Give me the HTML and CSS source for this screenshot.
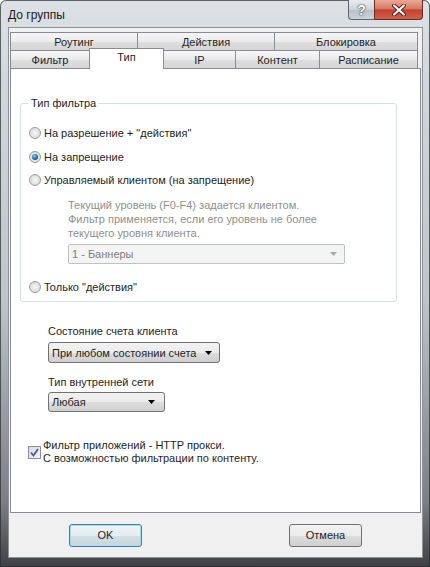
FILE: index.html
```html
<!DOCTYPE html>
<html lang="ru">
<head>
    <meta charset="UTF-8">
    <title>До группы</title>
    <link rel="stylesheet" href="styles.css">
</head>
<body>
<div class="window">
    <div class="titlebar">
        <span class="title">До группы</span>
        <div class="caption-buttons">
            <span class="cap-btn help">?</span>
            <span class="cap-btn close">
                <svg width="14" height="12" viewBox="0 0 14 12">
                    <path d="M2 1.5 L12 10.5 M12 1.5 L2 10.5" stroke="#5a1a12" stroke-width="4" stroke-linecap="round"/>
                    <path d="M2 1.5 L12 10.5 M12 1.5 L2 10.5" stroke="#ffffff" stroke-width="2.2" stroke-linecap="round"/>
                </svg>
            </span>
        </div>
    </div>

    <div class="client">
        <div class="tabs">
            <div class="tab-row">
                <div class="tab first tab-routing">Роутинг</div>
                <div class="tab tab-actions">Действия</div>
                <div class="tab tab-block">Блокировка</div>
            </div>
            <div class="tab-row">
                <div class="tab first tab-filter">Фильтр</div>
                <div class="tab selected tab-type">Тип</div>
                <div class="tab tab-ip">IP</div>
                <div class="tab tab-content">Контент</div>
                <div class="tab tab-sched">Расписание</div>
            </div>
        </div>

        <div class="panel">
            <fieldset class="groupbox">
                <legend>Тип фильтра</legend>
                <div class="radio-row r1"><span class="radio"></span>На разрешение + "действия"</div>
                <div class="radio-row r2"><span class="radio checked"></span>На запрещение</div>
                <div class="radio-row r3"><span class="radio"></span>Управляемый клиентом (на запрещение)</div>
                <p class="hint">Текущий уровень (F0-F4) задается клиентом.<br>Фильтр применяется, если его уровень не более<br>текущего уровня клиента.</p>
                <div class="combo disabled level-combo">
                    <span>1 - Баннеры</span>
                    <svg width="7" height="4" viewBox="0 0 7 4"><path d="M0 0 H7 L3.5 4 Z" fill="#a8a8a8"/></svg>
                </div>
                <div class="radio-row r4"><span class="radio"></span>Только "действия"</div>
            </fieldset>

            <div class="field-label state-label">Состояние счета клиента</div>
            <div class="combo state-combo">
                <span>При любом состоянии счета</span>
                <svg width="7" height="4" viewBox="0 0 7 4"><path d="M0 0 H7 L3.5 4 Z" fill="#000"/></svg>
            </div>

            <div class="field-label net-label">Тип внутренней сети</div>
            <div class="combo net-combo">
                <span>Любая</span>
                <svg width="7" height="4" viewBox="0 0 7 4"><path d="M0 0 H7 L3.5 4 Z" fill="#000"/></svg>
            </div>

            <div class="check-row">
                <span class="checkbox">
                    <svg width="9" height="9" viewBox="0 0 9 9"><path d="M1 4.5 L3.5 7.5 L8 1" fill="none" stroke="#4a5e8e" stroke-width="1.8"/></svg>
                </span>
                <span class="check-text">Фильтр приложений - HTTP прокси.<br>С возможностью фильтрации по контенту.</span>
            </div>
        </div>

        <div class="button-row">
            <span class="button default">OK</span>
            <span class="button">Отмена</span>
        </div>
    </div>
</div>
</body>
</html>
```

FILE: styles.css
```css
html, body {
    margin: 0;
    padding: 0;
}
body {
    width: 430px;
    height: 567px;
    overflow: hidden;
    font-family: "Liberation Sans", Arial, sans-serif;
    font-size: 11px;
    color: #1e1e1e;
}
.window {
    box-sizing: border-box;
    height: 567px;
    padding: 0 7px 9px 8px;
    display: flex;
    flex-direction: column;
    border-radius: 6px 6px 0 0;
    background: linear-gradient(to bottom, #dce1e6 0, #d2d7dc 80px, #bfc4c9 300px, #7c7f84 500px, #3f4043 567px);
    box-shadow: inset 0 0 0 1px rgba(40, 44, 50, 0.7);
}

/* title bar */
.titlebar {
    height: 27px;
    display: flex;
    justify-content: space-between;
    align-items: flex-start;
}
.title {
    padding-top: 8px;
    line-height: 14px;
    font-size: 12px;
    color: #1a1a1a;
}
.caption-buttons {
    display: flex;
}
.cap-btn {
    box-sizing: border-box;
    height: 20px;
    display: flex;
    align-items: center;
    justify-content: center;
    border: 1px solid #5d646c;
    border-top: 0;
}
.cap-btn.help {
    width: 26px;
    border-right: 0;
    border-radius: 0 0 0 4px;
    background: linear-gradient(#e9ecef, #cfd4d9 50%, #b8bfc6 51%, #ccd2d8);
    color: #fff;
    font-weight: bold;
    font-size: 14px;
    text-shadow: 0 0 2px #2b3038, 0 0 1px #2b3038;
}
.cap-btn.close {
    width: 49px;
    border-radius: 0 0 4px 0;
    border-color: #6b2a22;
    background: linear-gradient(#e9a897, #d77a66 45%, #c4432c 52%, #d0604a);
}

/* client area */
.client {
    flex: 1;
    display: flex;
    flex-direction: column;
    background: #f0f0f0;
    border: 1px solid #8d9297;
    padding: 4px 1px 0 1px;
}
.tab-row {
    display: flex;
}
.tab {
    box-sizing: border-box;
    height: 18px;
    line-height: 18px;
    text-align: center;
    border-top: 1px solid #898c95;
    border-right: 1px solid #898c95;
    background: linear-gradient(#f6f6f6, #ebebeb 50%, #dedede 51%, #d6d6d6);
}
.tab.first {
    border-left: 1px solid #898c95;
}
.tab.selected {
    position: relative;
    z-index: 1;
    height: 21px;
    margin: -2px 0 -1px -1px;
    border-left: 1px solid #898c95;
    background: #fff;
    line-height: 17px;
}
.tab-routing { width: 128px; }
.tab-actions { width: 137px; }
.tab-block { width: 143px; }
.tab-filter { width: 80px; }
.tab-type { width: 75px; }
.tab-ip { width: 72px; }
.tab-content { width: 84px; }
.tab-sched { width: 98px; }

.panel {
    flex: 1;
    background: #fff;
    border: 1px solid #898c95;
    display: flex;
    flex-direction: column;
    align-items: flex-start;
}

/* group box */
.groupbox {
    box-sizing: border-box;
    width: 377px;
    margin: 27px 0 0 9px;
    padding: 0 0 7px 8px;
    border: 1px solid #d5dfe5;
    border-radius: 3px;
}
.groupbox legend {
    margin-left: 0;
    padding: 0 2px;
    line-height: 14px;
}
.radio-row {
    display: flex;
    align-items: center;
    gap: 3px;
    height: 14px;
    white-space: nowrap;
}
.r1 { margin-top: 16px; }
.r2 { margin-top: 10px; }
.r3 { margin-top: 9px; }
.r4 { margin-top: 16px; }
.radio {
    box-sizing: border-box;
    width: 12px;
    height: 12px;
    border-radius: 50%;
    border: 1px solid #999d9e;
    background: radial-gradient(circle at 50% 50%, #f6f6f6 0, #e2e2e2 55%, #cdcdcd 100%);
    display: flex;
    align-items: center;
    justify-content: center;
}
.radio.checked::after {
    content: "";
    width: 6px;
    height: 6px;
    border-radius: 50%;
    background: radial-gradient(circle at 40% 35%, #8fd3f5 0, #2a7ab8 45%, #0c2c4c 100%);
}
.hint {
    margin: 11px 0 0 39px;
    line-height: 14px;
    color: #8f8f8f;
    white-space: nowrap;
}

/* combos */
.combo {
    box-sizing: border-box;
    display: flex;
    align-items: center;
    justify-content: space-between;
    padding: 0 7px 0 3px;
    border: 1px solid #707070;
    border-radius: 3px;
    white-space: nowrap;
    background: linear-gradient(#f2f2f2, #ebebeb 50%, #dddddd 51%, #cfcfcf);
}
.combo.disabled {
    border-color: #bcc1c5;
    border-radius: 2px;
    background: #f4f4f4;
    color: #7d7d7d;
}
.level-combo {
    width: 277px;
    height: 20px;
    margin: 4px 0 0 39px;
}
.field-label {
    margin-left: 37px;
    line-height: 14px;
}
.state-label { margin-top: 22px; }
.net-label { margin-top: 12px; }
.state-combo {
    width: 172px;
    height: 21px;
    margin: 4px 0 0 37px;
}
.net-combo {
    width: 117px;
    height: 20px;
    margin: 3px 0 0 37px;
    padding-right: 9px;
}

/* checkbox */
.check-row {
    display: flex;
    align-items: center;
    gap: 2px;
    margin: 27px 0 0 17px;
    white-space: nowrap;
}
.checkbox {
    box-sizing: border-box;
    width: 13px;
    height: 13px;
    margin-top: 0;
    border: 1px solid #8e8f8f;
    background: linear-gradient(135deg, #d4dbe6, #f1f4f8);
    display: flex;
    align-items: center;
    justify-content: center;
}
.check-text {
    line-height: 13px;
}

/* buttons */
.button-row {
    height: 44px;
    display: flex;
    align-items: center;
    gap: 147px;
    padding-left: 59px;
}
.button {
    box-sizing: border-box;
    width: 73px;
    height: 23px;
    display: flex;
    align-items: center;
    justify-content: center;
    border: 1px solid #707070;
    border-radius: 3px;
    background: linear-gradient(#f2f2f2, #ebebeb 50%, #dddddd 51%, #cfcfcf);
}
.button.default {
    border-color: #3c7fb1;
    box-shadow: inset 0 0 0 1px #a7dcf2;
    background: linear-gradient(#eef4f7, #e4ecf0 50%, #d4e0e6 51%, #c8d6dd);
}
```
